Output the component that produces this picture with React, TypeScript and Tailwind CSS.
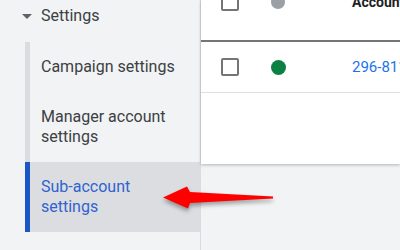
import React from "react";

function Checkbox() {
  return <div className="w-[18px] h-[18px] border-2 border-[#757575] rounded-[2px] bg-white shrink-0" />;
}

export default function App() {
  return (
    <div className="relative w-[400px] h-[250px] bg-[#f1f3f4] flex overflow-hidden font-['Roboto',sans-serif]">
      <aside className="w-[200px] shrink-0 text-[16px] leading-[20px] text-[#3c4043]">
        <div className="h-[42px] flex items-start pt-[6px]">
          <div className="h-[20px] flex items-center ml-[22px] w-[19px]">
            <svg width="10" height="5" viewBox="0 0 10 5">
              <polygon points="0,0 10,0 5,5" fill="#5f6368" />
            </svg>
          </div>
          <span>Settings</span>
        </div>
        <div className="ml-[25px]">
          <div className="border-l-[5px] border-[#dadce0] pl-[11px] py-[15px]">Campaign settings</div>
          <div className="border-l-[5px] border-[#dadce0] pl-[11px] py-[15px]">
            Manager account
            <br />
            settings
          </div>
          <div className="border-l-[5px] border-[#1a56c4] bg-[#dcdde0] pl-[11px] py-[15px] text-[#2f63d0]">
            Sub-account
            <br />
            settings
          </div>
        </div>
      </aside>
      <main className="flex-1 min-w-0 border-l border-[#dadce0]">
        <div className="flex flex-col bg-white h-[164px] shadow-[0_1px_3px_rgba(60,64,67,0.35)]">
          <div className="-mt-[36px] h-[78px] shrink-0 flex items-center border-b-2 border-[#757575] pl-[20px]">
            <div className="w-[50px] shrink-0">
              <Checkbox />
            </div>
            <div className="w-[81px] shrink-0">
              <div className="w-[14px] h-[14px] rounded-full bg-[#9aa0a6]" />
            </div>
            <span className="text-[14px] font-bold text-[#202124] whitespace-nowrap">Account name</span>
          </div>
          <div className="h-[51px] shrink-0 flex items-center border-b border-[#e0e0e0] pl-[20px]">
            <div className="w-[50px] shrink-0">
              <Checkbox />
            </div>
            <div className="w-[81px] shrink-0">
              <div className="w-[15px] h-[15px] rounded-full bg-[#0b8043]" />
            </div>
            <span className="text-[15px] text-[#1a73e8] whitespace-nowrap">296-811-4567</span>
          </div>
        </div>
      </main>
      <svg
        className="absolute left-0 top-0 drop-shadow-[0_3px_2px_rgba(0,0,0,0.35)]"
        width="400"
        height="250"
        viewBox="0 0 400 250"
      >
        <polygon
          points="163,197.5 187,186.5 190,192 273,196.5 273,198.5 190,203 188,208.5"
          fill="#ff0000"
        />
      </svg>
    </div>
  );
}
